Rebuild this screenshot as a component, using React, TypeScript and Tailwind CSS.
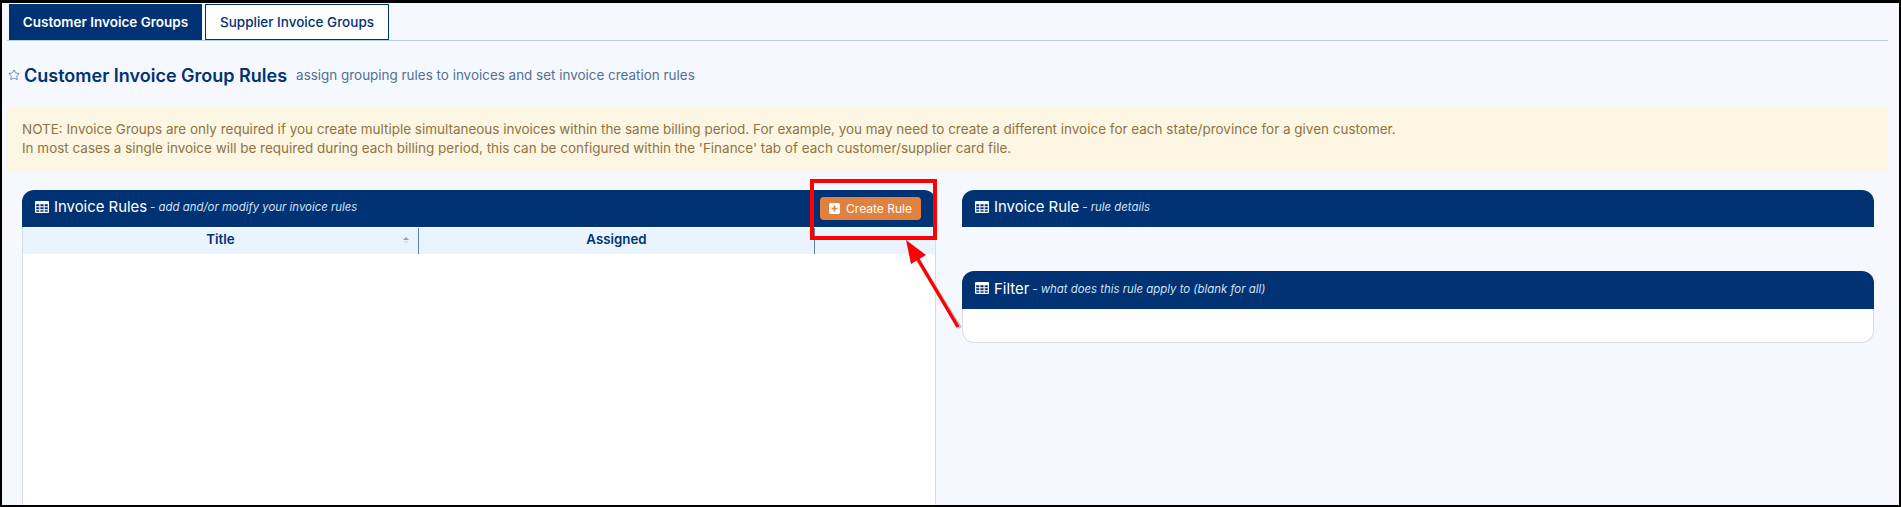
import { Star } from "lucide-react";

const NAVY = "bg-[#003274]";

function GridIcon() {
  return (
    <svg viewBox="0 0 14 12" className="mb-[2px] mr-[5px] inline-block h-[12px] w-[14px] shrink-0" aria-hidden>
      <path
        fill="#fff"
        fillRule="evenodd"
        d="M1 0h12a1 1 0 0 1 1 1v10a1 1 0 0 1-1 1H1a1 1 0 0 1-1-1V1a1 1 0 0 1 1-1Zm.2 3.2v2h3.1v-2Zm4.2 0v2h3.2v-2Zm4.3 0v2h3.1v-2Zm-8.5 3v2h3.1v-2Zm4.2 0v2h3.2v-2Zm4.3 0v2h3.1v-2Zm-8.5 3v1.6h3.1V9.2Zm4.2 0v1.6h3.2V9.2Zm4.3 0v1.6h3.1V9.2Z"
      />
    </svg>
  );
}

function PanelHeader({ title, hint, className, children }: { title: string; hint: string; className: string; children?: React.ReactNode }) {
  return (
    <div className={`${NAVY} ${className} flex items-center justify-between rounded-t-[12px] pl-[13px] pr-[13px] text-white`}>
      <div className="flex items-center pb-[2px]">
        <GridIcon />
        <span className="text-[14.9px] leading-none">{title}</span>
        <span className="ml-[3px] mt-[1px] text-[11.4px] italic leading-none text-[#cfe2f5]">- {hint}</span>
      </div>
      {children}
    </div>
  );
}

export default function App() {
  return (
    <div className="relative h-[507px] w-[1901px] overflow-hidden border-x-2 border-t-[3px] border-b-2 border-black bg-[#f5f9ff] font-['Inter','Liberation_Sans',sans-serif]">
      {/* tabs */}
      <div className="ml-[5px] mr-[11px] flex h-[38px] items-end gap-[3px] border-b border-[#b9d0e2] pl-[2px]">
        <div className={`${NAVY} flex h-[36px] w-[193px] items-center justify-center whitespace-nowrap text-[13.5px] font-semibold text-white`}>
          Customer Invoice Groups
        </div>
        <div className="flex h-[36px] w-[184px] items-center justify-center whitespace-nowrap border border-[#003274] bg-white text-[13.5px] font-medium text-[#003274]">
          Supplier Invoice Groups
        </div>
      </div>

      {/* page title */}
      <div className="ml-[6px] mt-[22px] flex h-[24px] items-center">
        <Star className="mr-[4px] h-[12px] w-[12px] text-[#44608c]" strokeWidth={1.5} />
        <span className="text-[18px] font-semibold text-[#003274]">Customer Invoice Group Rules</span>
        <span className="ml-[9px] mt-[1px] text-[13.45px] text-[#526f96]">
          assign grouping rules to invoices and set invoice creation rules
        </span>
      </div>

      {/* note */}
      <div className="ml-[5px] mr-[11px] mt-[19px] flex h-[66px] flex-col justify-center rounded-[4px] bg-[#fdf6e3] px-[15px] text-[13.47px] leading-[19px] text-[#8e7442]">
        <p>
          NOTE: Invoice Groups are only required if you create multiple simultaneous invoices within the same billing period. For example, you may need to create a different invoice for each state/province for a given customer.
        </p>
        <p>
          In most cases a single invoice will be required during each billing period, this can be configured within the 'Finance' tab of each customer/supplier card file.
        </p>
      </div>

      <div className="ml-[20px] mt-[18px] flex gap-[26px]">
        {/* invoice rules */}
        <div className="flex h-[400px] w-[914px] flex-col">
          <PanelHeader title="Invoice Rules" hint="add and/or modify your invoice rules" className="h-[37px]">
            <button className="mr-[2px] flex h-[23px] w-[101px] items-center justify-center rounded-[4px] bg-[#e0823d] text-[12px] text-white">
              <svg viewBox="0 0 11 11" className="mr-[6px] h-[11px] w-[11px]" aria-hidden>
                <rect width="11" height="11" rx="2" fill="#fff" />
                <path d="M5.5 2.5v6M2.5 5.5h6" stroke="#e0823d" strokeWidth="1.7" />
              </svg>
              Create Rule
            </button>
          </PanelHeader>
          <div className="flex flex-1 flex-col border-x border-[#d9dde3] bg-white">
            <div className="mt-[1px] grid h-[26px] grid-cols-[396px_396px_1fr] bg-[#e9f4fe] text-[13.3px] font-semibold text-[#003274]">
              <div className="relative flex items-center justify-center border-r border-[#5f80a8] pb-[2px]">
                Title
                <span className="absolute right-[9px] top-[9px] flex flex-col gap-[1px]">
                  <span className="h-0 w-0 border-x-[3px] border-b-[3px] border-x-transparent border-b-[#7ea6d0]" />
                  <span className="h-0 w-0 border-x-[3px] border-t-[3px] border-x-transparent border-t-[#d6e4f2]" />
                </span>
              </div>
              <div className="flex items-center justify-center border-r border-[#5f80a8] pb-[2px]">Assigned</div>
              <div />
            </div>
          </div>
        </div>

        {/* right column */}
        <div className="flex w-[912px] flex-col">
          <PanelHeader title="Invoice Rule" hint="rule details" className="h-[37px]" />
          <div className="mt-[44px]">
            <PanelHeader title="Filter" hint="what does this rule apply to (blank for all)" className="h-[38px]" />
            <div className="h-[34px] rounded-b-[12px] border border-t-0 border-[#d9dde3] bg-white" />
          </div>
        </div>
      </div>

      {/* red annotation */}
      <div className="absolute left-[808px] top-[176px] h-[61px] w-[127px] border-[4px] border-[#fe0000]" />
      <svg className="pointer-events-none absolute left-[880px] top-[220px]" width="100" height="120" viewBox="0 0 100 120" aria-hidden>
        <path d="M76 104 34 36" stroke="#000" strokeOpacity="0.25" strokeWidth="4" transform="translate(2 1)" />
        <path d="M76 104 34 33" stroke="#fe0000" strokeWidth="3.4" />
        <path d="M24 17 29 41 44 32Z" fill="#fe0000" />
      </svg>
    </div>
  );
}
